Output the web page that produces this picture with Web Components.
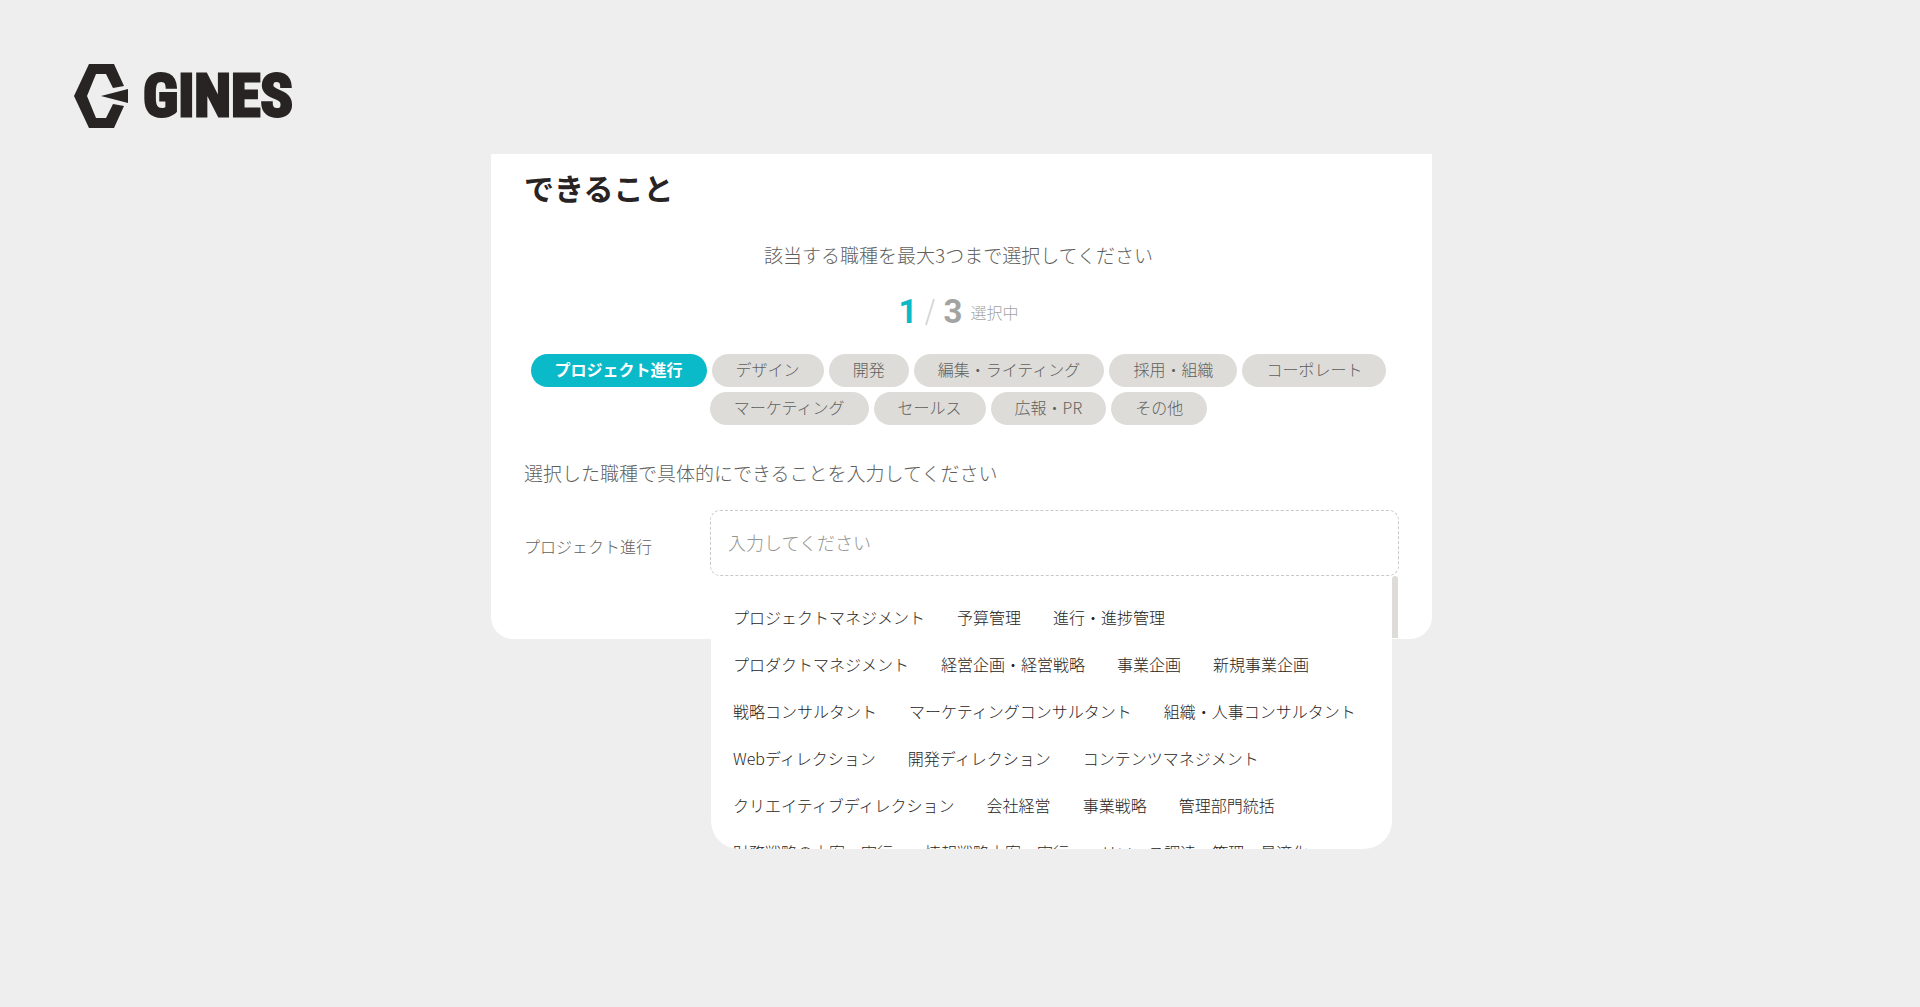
<!DOCTYPE html>
<html lang="ja">
<head>
<meta charset="utf-8">
<meta name="viewport" content="width=device-width, initial-scale=1">
<title>GINES</title>
<style>
  body {
    margin: 0;
    min-height: 100vh;
    background: #eeeeee;
    color: #5f5f5d;
    font-family: "Noto Sans CJK JP", "Liberation Sans", sans-serif;
    font-size: 16px;
    font-weight: 300;
  }
  header {
    padding: 62px 74px 24px;
  }
  main {
    display: grid;
    grid-template-columns: 491fr 941fr 488fr;
  }
  skill-card {
    grid-column: 2;
  }
</style>
</head>
<body>
<header><gines-logo></gines-logo></header>
<main>
  <skill-card>
    <span slot="title">できること</span>
    <span slot="lead">該当する職種を最大3つまで選択してください</span>
    <select-counter slot="counter" count="1" max="3">選択中</select-counter>
    <job-chip slot="chips" selected>プロジェクト進行</job-chip>
    <job-chip slot="chips">デザイン</job-chip>
    <job-chip slot="chips">開発</job-chip>
    <job-chip slot="chips">編集・ライティング</job-chip>
    <job-chip slot="chips">採用・組織</job-chip>
    <job-chip slot="chips">コーポレート</job-chip>
    <job-chip slot="chips">マーケティング</job-chip>
    <job-chip slot="chips">セールス</job-chip>
    <job-chip slot="chips">広報・PR</job-chip>
    <job-chip slot="chips">その他</job-chip>
    <span slot="note">選択した職種で具体的にできることを入力してください</span>
    <skill-field label="プロジェクト進行" placeholder="入力してください"></skill-field>
  </skill-card>
</main>

<script>
class GinesLogo extends HTMLElement {
  constructor() {
    super();
    this.attachShadow({ mode: "open" });
    this.shadowRoot.innerHTML = `
      <style>
        :host {
          display: flex;
          align-items: center;
          gap: 14px;
          height: 68px;
          color: #272423;
        }
        svg {
          width: 55px;
          height: 66px;
          fill: currentColor;
        }
        span {
          font-family: "Roboto Condensed", "Open Sans Condensed", "Liberation Sans Narrow", "Liberation Sans", sans-serif;
          font-size: 60px;
          font-weight: 700;
          line-height: 68px;
          -webkit-text-stroke: 3px currentColor;
        }
      </style>
      <svg viewBox="0 0 55 66" aria-hidden="true">
        <path d="M15 1H40L50 23L39 25L32 11H22L13 33L22 55H32L39 41L50 43L40 65H15L0 33Z"/>
        <path d="M27 33L54 26V40Z"/>
      </svg>
      <span>GINES</span>
    `;
  }
}

class SelectCounter extends HTMLElement {
  constructor() {
    super();
    this.attachShadow({ mode: "open" });
    this.shadowRoot.innerHTML = `
      <style>
        :host {
          display: flex;
          justify-content: center;
          align-items: center;
          gap: 8px;
          height: 40px;
          line-height: 38px;
          color: #a3a3a1;
        }
        b {
          font-family: Roboto, "Liberation Sans", sans-serif;
          font-size: 33px;
          font-weight: 700;
          line-height: 40px;
          color: #a3a3a1;
        }
        .count {
          color: #0bbac8;
        }
        svg {
          width: 10px;
          height: 28px;
          stroke: #d8d8d6;
          stroke-width: 2;
        }
      </style>
      <b class="count">${this.getAttribute("count")}</b>
      <svg viewBox="0 0 10 28" aria-hidden="true"><path d="M9 1L1 27"/></svg>
      <b>${this.getAttribute("max")}</b>
      <slot></slot>
    `;
  }
}

class JobChip extends HTMLElement {
  constructor() {
    super();
    this.attachShadow({ mode: "open" });
    this.shadowRoot.innerHTML = `
      <style>
        :host {
          display: block;
        }
        button {
          display: block;
          height: 33px;
          padding: 0 24px 3px;
          border: none;
          border-radius: 17px;
          background: #dddcd9;
          color: #5f5f5d;
          font: inherit;
          line-height: 30px;
          cursor: pointer;
        }
        :host([selected]) button {
          background: #0bbac8;
          color: white;
          font-weight: bold;
        }
      </style>
      <button type="button"><slot></slot></button>
    `;

    this.btn = this.shadowRoot.querySelector("button");
    this.btn.addEventListener("click", () => {
      this.toggleAttribute("selected");
    });
  }
}

class SuggestList extends HTMLElement {
  constructor() {
    super();
    this.attachShadow({ mode: "open" });
    const rows = [
      ["プロジェクトマネジメント", "予算管理", "進行・進捗管理"],
      ["プロダクトマネジメント", "経営企画・経営戦略", "事業企画", "新規事業企画"],
      ["戦略コンサルタント", "マーケティングコンサルタント", "組織・人事コンサルタント"],
      ["Webディレクション", "開発ディレクション", "コンテンツマネジメント"],
      ["クリエイティブディレクション", "会社経営", "事業戦略", "管理部門統括"],
      ["財務戦略の立案・実行", "情報戦略立案・実行", "リソース調達・管理・最適化"],
    ];
    this.shadowRoot.innerHTML = `
      <style>
        :host {
          display: flex;
          align-items: flex-start;
        }
        .list {
          flex: 1;
          display: flex;
          flex-direction: column;
          gap: 23px;
          box-sizing: border-box;
          height: 273px;
          padding: 29px 22px 0;
          overflow: hidden;
          background: white;
          border-radius: 0 0 28px 28px;
        }
        .row {
          display: flex;
          flex: none;
          gap: 32px;
        }
        button {
          padding: 0;
          border: none;
          background: none;
          color: #272423;
          font: inherit;
          line-height: 24px;
          white-space: nowrap;
          cursor: pointer;
        }
        .thumb {
          width: 6px;
          height: 62px;
          border-radius: 3px 3px 0 0;
          background: #dddcd9;
        }
      </style>
      <div class="list">
        ${rows.map((row) => `<div class="row">${row.map((item) => `<button type="button">${item}</button>`).join("")}</div>`).join("")}
      </div>
      <div class="thumb"></div>
    `;

    this.shadowRoot.addEventListener("click", (event) => {
      if (event.target.tagName === "BUTTON") {
        this.dispatchEvent(new CustomEvent("pick", { detail: event.target.textContent }));
      }
    });
  }
}

class SkillField extends HTMLElement {
  constructor() {
    super();
    this.attachShadow({ mode: "open" });
    this.shadowRoot.innerHTML = `
      <style>
        :host {
          display: grid;
          grid-template-columns: 186px 1fr;
          align-items: center;
        }
        label {
          padding-top: 5px;
          line-height: 24px;
        }
        .box {
          position: relative;
        }
        input {
          display: block;
          box-sizing: border-box;
          width: 100%;
          height: 66px;
          padding: 0 17px 2px;
          border: 1px dashed #c8c8c6;
          border-radius: 10px;
          background: white;
          color: #272423;
          font: inherit;
          font-size: 18px;
          outline: none;
        }
        input::placeholder {
          color: #949492;
        }
        /* The suggestions hang below the box and over the card's edge */
        suggest-list {
          position: absolute;
          top: 100%;
          left: 1px;
          right: 1px;
        }
      </style>
      <label for="skill">${this.getAttribute("label")}</label>
      <div class="box">
        <input type="text" id="skill" placeholder="${this.getAttribute("placeholder")}">
        <suggest-list></suggest-list>
      </div>
    `;

    this.input = this.shadowRoot.querySelector("input");
    this.shadowRoot.querySelector("suggest-list").addEventListener("pick", (event) => {
      this.input.value = event.detail;
    });
  }
}

class SkillCard extends HTMLElement {
  constructor() {
    super();
    this.attachShadow({ mode: "open" });
    this.shadowRoot.innerHTML = `
      <style>
        :host {
          display: block;
          padding: 15px 33px 63px;
          background: white;
          border-radius: 0 0 22px 22px;
        }
        h1, p {
          margin: 0;
        }
        h1 {
          color: #272423;
          font-size: 30px;
          line-height: 36px;
        }
        p {
          font-size: 19px;
          line-height: 28px;
        }
        .pick {
          padding: 36px 6px 34px 0;
          text-align: center;
        }
        .counter {
          padding: 23px 0 22px;
        }
        .chips {
          display: flex;
          flex-wrap: wrap;
          justify-content: center;
          gap: 5px;
        }
        .note {
          padding-bottom: 23px;
        }
      </style>
      <h1><slot name="title"></slot></h1>
      <div class="pick">
        <p><slot name="lead"></slot></p>
        <div class="counter"><slot name="counter"></slot></div>
        <div class="chips"><slot name="chips"></slot></div>
      </div>
      <p class="note"><slot name="note"></slot></p>
      <slot></slot>
    `;
  }
}

customElements.define("gines-logo", GinesLogo);
customElements.define("select-counter", SelectCounter);
customElements.define("job-chip", JobChip);
customElements.define("suggest-list", SuggestList);
customElements.define("skill-field", SkillField);
customElements.define("skill-card", SkillCard);
</script>
</body>
</html>
